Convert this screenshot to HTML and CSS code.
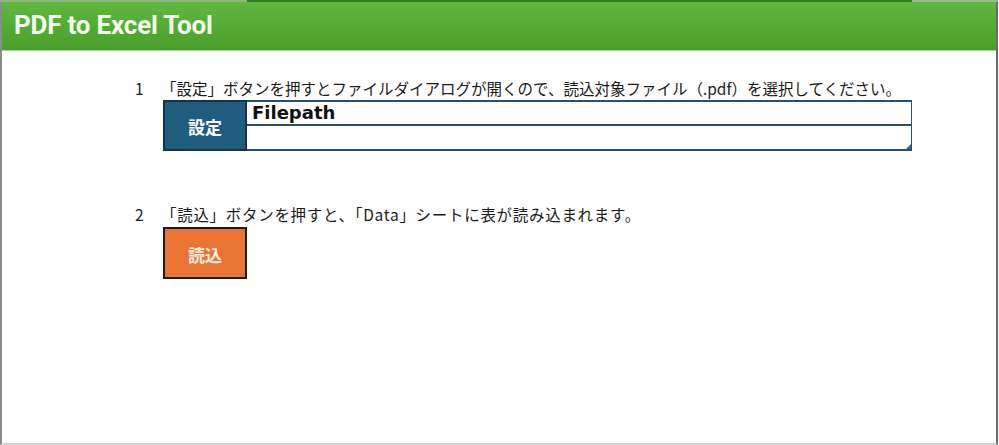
FILE: index.html
```html
<!DOCTYPE html>
<html lang="ja">
<head>
<meta charset="utf-8">
<title>PDF to Excel Tool</title>
<link rel="stylesheet" href="styles.css">
</head>
<body>
<div class="frame">
  <div class="topline"><span class="seg seg-a"></span><span class="seg seg-b"></span><span class="seg seg-c"></span></div>
  <header class="header"><h1 class="title">PDF to Excel Tool</h1></header>
  <main class="content">
    <section class="step">
      <p class="instr"><span class="num">1</span><span class="txt">「設定」ボタンを押すとファイルダイアログが開くので、読込対象ファイル（.pdf）を選択してください。</span></p>
      <div class="controls">
        <div class="btn btn-set">設定</div>
        <div class="filebox">
          <div class="fp-label">Filepath</div>
          <div class="fp-value"><span class="grip"></span></div>
        </div>
      </div>
    </section>
    <section class="step step2">
      <p class="instr"><span class="num">2</span><span class="txt txt-wide">「読込」ボタンを押すと、「Data」シートに表が読み込まれます。</span></p>
      <div class="controls">
        <div class="btn btn-load">読込</div>
      </div>
    </section>
  </main>
</div>
</body>
</html>
```
FILE: styles.css
```css
* { box-sizing: border-box; }
html, body { margin: 0; padding: 0; background: #fff; }
body {
  width: 999px;
  height: 445px;
  overflow: hidden;
  font-family: "Noto Sans CJK JP", "Noto Sans", sans-serif;
  color: #1a1a1a;
}
.frame {
  width: 998px;
  height: 445px;
  border-left: 2px solid #8c8c8c;
  border-right: 2px solid #6a6a6a;
  border-bottom: 2px solid #d2d2d2;
  display: flex;
  flex-direction: column;
}
.topline { display: flex; height: 2px; margin-left: -2px; margin-right: -2px; }
.seg { display: block; height: 2px; }
.seg-a { width: 247px; background: #8fb27e; }
.seg-b { width: 665px; background: #2f7a22; }
.seg-c { flex: 1; background: #9cb890; }
.header {
  height: 49px;
  background: linear-gradient(#5fb83f, #4a9f29);
  border-bottom: 1px solid #a9d69a;
  display: flex;
  align-items: center;
  padding-left: 12px;
}
.title {
  margin: 0;
  color: #f4fbef;
  font-family: Roboto, "Liberation Sans", sans-serif;
  font-weight: 700;
  font-size: 26px;
  letter-spacing: -0.2px;
  line-height: 1;
  padding-bottom: 2px;
}
.content { padding: 27px 0 0 133px; }
.instr {
  margin: 0;
  display: flex;
  font-size: 15.5px;
  line-height: 21px;
  height: 21px;
}
.num { width: 26px; }
.txt-wide { letter-spacing: 0.7px; }
.controls {
  display: flex;
  margin: 1px 0 0 28px;
}
.btn {
  width: 84px;
  height: 51px;
  display: flex;
  align-items: center;
  justify-content: center;
  color: #fff;
  font-weight: 700;
  font-size: 17px;
  padding-top: 2px;
}
.btn-set {
  background: #1f5d7e;
  border: 2px solid #17324a;
}
.btn-load {
  background: #e97434;
  border: 2px solid #1c1c1c;
  height: 52px;
  color: #fbeee4;
}
.filebox {
  width: 665px;
  height: 51px;
  border: 1px solid #2e4e70;
  border-left: none;
  border-top-width: 2px;
  border-bottom-width: 2px;
  display: flex;
  flex-direction: column;
}
.fp-label {
  height: 24px;
  border-bottom: 2px solid #2e4e70;
  font-family: "DejaVu Sans", "Noto Sans", sans-serif;
  font-weight: 700;
  font-size: 18px;
  line-height: 21px;
  padding-left: 5px;
  color: #111;
}
.fp-value { flex: 1; position: relative; }
.grip {
  position: absolute;
  right: 0;
  bottom: 0;
  width: 0;
  height: 0;
  border-left: 5px solid transparent;
  border-bottom: 5px solid #3f5f86;
}
.step2 { margin-top: 53px; }
.step2 .controls { margin-top: 2px; }
```
